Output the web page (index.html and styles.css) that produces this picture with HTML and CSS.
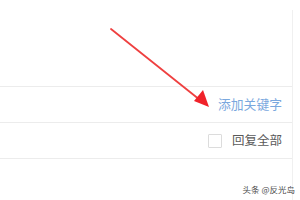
FILE: index.html
```html
<!DOCTYPE html>
<html>
<head>
<meta charset="utf-8">
<link rel="stylesheet" href="styles.css">
</head>
<body>
<div class="panel">
  <div class="top"></div>
  <div class="row">
    <span class="link">添加关键字</span>
  </div>
  <div class="row">
    <label class="check"><span class="box"></span><span class="label">回复全部</span></label>
  </div>
</div>
<svg class="arrow" width="300" height="200" viewBox="0 0 300 200">
  <line x1="111" y1="29" x2="200" y2="100" stroke="#ef4040" stroke-width="1.8" stroke-linecap="round"/>
  <polygon points="209,107 194,101 203,90" fill="#f0222a"/>
</svg>
<div class="mark">头条 @反光岛</div>
</body>
</html>
```
FILE: styles.css
```css
html, body {
  margin: 0;
  padding: 0;
  background: #fff;
  width: 300px;
  height: 200px;
  overflow: hidden;
  font-family: "Noto Sans CJK SC", "Noto Sans", sans-serif;
}
.panel {
  margin-top: 10px;
  width: 292px;
  height: 190px;
  border-right: 1px solid #f0f0f0;
  display: flex;
  flex-direction: column;
}
.top {
  height: 76px;
  border-bottom: 1px solid #ececec;
}
.row {
  height: 35px;
  border-bottom: 1px solid #ececec;
  display: flex;
  align-items: center;
  justify-content: flex-end;
  padding-right: 10px;
}
.link {
  color: #7aa8de;
  font-size: 12.8px;
  line-height: 1;
}
.check {
  display: flex;
  align-items: center;
  gap: 10px;
}
.box {
  width: 12px;
  height: 12px;
  border: 1px solid #dcdcdc;
  border-radius: 1px;
}
.label {
  color: #5a5a5a;
  font-size: 12.5px;
  line-height: 1;
}
.arrow {
  position: absolute;
  left: 0;
  top: 0;
}
.mark {
  position: absolute;
  right: 5px;
  top: 184px;
  font-size: 8.5px;
  color: #4a4a4a;
  line-height: 11px;
}
```
